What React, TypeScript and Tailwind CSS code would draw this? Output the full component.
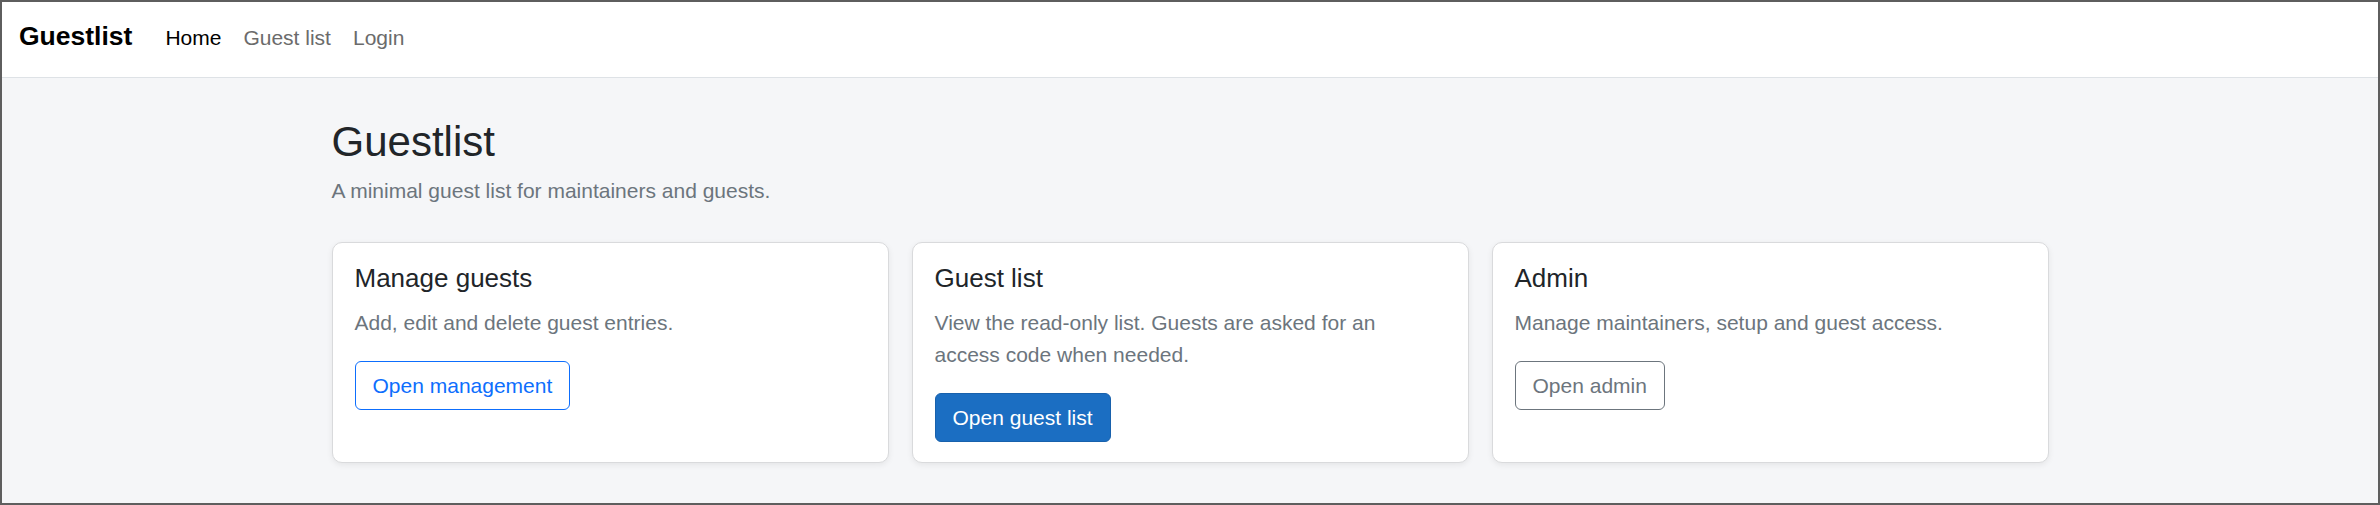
const cards = [
  {
    title: 'Manage guests',
    desc: 'Add, edit and delete guest entries.',
    action: 'Open management',
    btn: 'border-[#0d6efd] text-[#0d6efd] bg-white',
  },
  {
    title: 'Guest list',
    desc: 'View the read-only list. Guests are asked for an access code when needed.',
    action: 'Open guest list',
    btn: 'border-[#1861ac] text-white bg-[#1b6ec2]',
  },
  {
    title: 'Admin',
    desc: 'Manage maintainers, setup and guest access.',
    action: 'Open admin',
    btn: 'border-[#6c757d] text-[#6c757d] bg-white',
  },
];

export default function App() {
  return (
    <div className="h-screen flex flex-col border-2 border-[#5e5e5e] bg-[#f5f6f8] font-['Liberation_Sans',Arial,sans-serif] overflow-hidden">
      {/* Top navbar */}
      <nav className="h-[76px] shrink-0 flex items-center px-[17px] pb-[6px] bg-white border-b border-[#dee2e6]">
        <span className="text-[26.5px] font-bold text-black mr-[33px] leading-none">Guestlist</span>
        <div className="flex items-center gap-[22px] text-[21px] leading-none pt-[1px]">
          <a className="text-black">Home</a>
          <a className="text-[#6b6b6b]">Guest list</a>
          <a className="text-[#6b6b6b]">Login</a>
        </div>
      </nav>

      <main className="flex-1">
        <div className="w-[1717px] mx-auto pt-[39px]">
          <h1 className="text-[42px] leading-[1.2] text-[#212529] mb-[8px]">Guestlist</h1>
          <p className="text-[21px] leading-[1.5] text-[#6c757d] mb-[35px]">
            A minimal guest list for maintainers and guests.
          </p>

          <div className="grid grid-cols-3 gap-[23px]">
            {cards.map((card, idx) => (
              <div
                key={idx}
                className="bg-white border border-[#d9dadc] rounded-[10px] shadow-[0_2px_6px_rgba(0,0,0,0.07)] pt-[20px] pb-[20px] px-[22px] flex flex-col items-start"
              >
                <h5 className="text-[26px] leading-[1.2] text-[#212529] mb-[13px]">{card.title}</h5>
                <p className="text-[21px] leading-[1.5] text-[#6c757d] mb-[22.5px]">{card.desc}</p>
                <button className={`h-[49px] px-[17px] border rounded-[6px] text-[21px] leading-none ${card.btn}`}>
                  {card.action}
                </button>
              </div>
            ))}
          </div>
        </div>
      </main>
    </div>
  );
}
